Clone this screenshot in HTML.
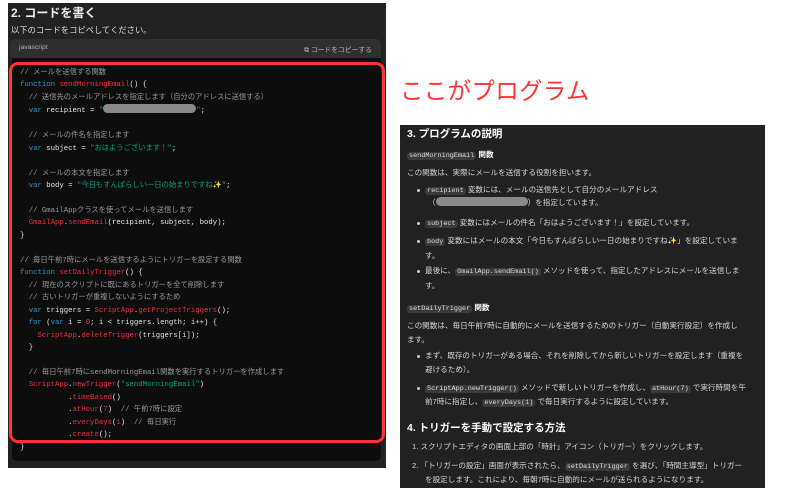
<!DOCTYPE html>
<html><head><meta charset="utf-8"><style>
*{margin:0;padding:0;box-sizing:border-box}
body{width:800px;height:500px;background:#fff;position:relative;overflow:hidden;font-family:"Liberation Sans","Noto Sans CJK JP",sans-serif}
.lp{position:absolute;left:8px;top:3px;width:378px;height:465px;background:#212121}
.h2{position:absolute;left:3px;top:1px;color:#ececec;font-size:12px;font-weight:bold}
.intro{position:absolute;left:3px;top:21px;color:#ddd;font-size:8.3px}
.hdr{position:absolute;left:10px;top:39px;width:371px;height:19px;background:#2f2f2f;border-radius:5px 5px 0 0;color:#b4b4b4;font-size:6.8px}
.code{position:absolute;left:12px;top:58px;width:369px;height:403px;background:#0d0d0d;border-radius:0 0 5px 5px}
.red{position:absolute;left:9px;top:62px;width:376px;height:381px;border:3px solid #f33;border-radius:9px}
pre{position:absolute;left:20px;top:67px;font-family:"Liberation Mono","Noto Sans CJK JP",monospace;font-size:7.3px;line-height:12.45px;color:#e6e6e6}
.c{color:#9a9a9a}.k{color:#2e95d3}.f{color:#f22c3d}.s{color:#00a67d}.n{color:#df3079}
.blur{display:inline-block;width:93px;height:9px;background:#8a8a8a;border-radius:5px;vertical-align:-1px}
.rt{position:absolute;left:400px;top:72px;color:#f33;font-size:23.5px;letter-spacing:0.3px}
.rp{position:absolute;left:400px;top:125px;width:365px;height:363px;background:#212121;color:#d8d8d8;font-size:7.6px}
.rp div{position:absolute;white-space:nowrap}
.ic{background:#3a3a3a;border-radius:3px;padding:0 2px;font-family:"Liberation Mono",monospace;font-size:6.8px;color:#ddd}
.b{color:#fff;font-weight:bold}
.dot{position:absolute;width:3px;height:3px;background:#ccc;border-radius:50%}
</style></head><body>
<div class="lp">
<div class="h2">2. コードを書く</div>
<div class="intro">以下のコードをコピペしてください。</div>
</div>
<div class="hdr"><span style="position:absolute;left:9px;top:5px">javascript</span><span style="position:absolute;right:9px;top:5px">⧉ コードをコピーする</span></div>
<div class="code"></div>
<pre><span class="c">// メールを送信する関数</span>
<span class="k">function</span> <span class="f">sendMorningEmail</span>() {
  <span class="c">// 送信先のメールアドレスを指定します（自分のアドレスに送信する）</span>
  <span class="k">var</span> recipient = <span class="s">"<span class="blur"></span>"</span>;

  <span class="c">// メールの件名を指定します</span>
  <span class="k">var</span> subject = <span class="s">"おはようございます！"</span>;

  <span class="c">// メールの本文を指定します</span>
  <span class="k">var</span> body = <span class="s">"今日もすんばらしい一日の始まりですね✨"</span>;

  <span class="c">// GmailAppクラスを使ってメールを送信します</span>
  <span class="f">GmailApp</span>.<span class="f">sendEmail</span>(recipient, subject, body);
}

<span class="c">// 毎日午前7時にメールを送信するようにトリガーを設定する関数</span>
<span class="k">function</span> <span class="f">setDailyTrigger</span>() {
  <span class="c">// 現在のスクリプトに既にあるトリガーを全て削除します</span>
  <span class="c">// 古いトリガーが重複しないようにするため</span>
  <span class="k">var</span> triggers = <span class="f">ScriptApp</span>.<span class="f">getProjectTriggers</span>();
  <span class="k">for</span> (<span class="k">var</span> i = <span class="n">0</span>; i &lt; triggers.length; i++) {
    <span class="f">ScriptApp</span>.<span class="f">deleteTrigger</span>(triggers[i]);
  }

  <span class="c">// 毎日午前7時にsendMorningEmail関数を実行するトリガーを作成します</span>
  <span class="f">ScriptApp</span>.<span class="f">newTrigger</span>(<span class="s">"sendMorningEmail"</span>)
           .<span class="f">timeBased</span>()
           .<span class="f">atHour</span>(<span class="n">7</span>)  <span class="c">// 午前7時に設定</span>
           .<span class="f">everyDays</span>(<span class="n">1</span>)  <span class="c">// 毎日実行</span>
           .<span class="f">create</span>();
}</pre>
<div class="red"></div>
<div class="rt">ここがプログラム</div>
<div class="rp">
<div class="b" style="left:7px;top:1px;font-size:10.5px">3. プログラムの説明</div>
<div style="left:7px;top:24px"><span class="ic">sendMorningEmail</span> <span class="b">関数</span></div>
<div style="left:7px;top:42px">この関数は、実際にメールを送信する役割を担います。</div>
<span class="dot" style="left:17px;top:64px"></span>
<div style="left:25px;top:59px"><span class="ic">recipient</span> 変数には、メールの送信先として自分のメールアドレス</div>
<div style="left:28px;top:72px">（<span class="blur" style="width:92px"></span>）を指定しています。</div>
<span class="dot" style="left:17px;top:97px"></span>
<div style="left:25px;top:92px"><span class="ic">subject</span> 変数にはメールの件名「おはようございます！」を設定しています。</div>
<span class="dot" style="left:17px;top:115px"></span>
<div style="left:25px;top:110px"><span class="ic">body</span> 変数にはメールの本文「今日もすんばらしい一日の始まりですね✨」を設定していま</div>
<div style="left:25px;top:125px">す。</div>
<span class="dot" style="left:17px;top:145px"></span>
<div style="left:25px;top:140px">最後に、<span class="ic">GmailApp.sendEmail()</span> メソッドを使って、指定したアドレスにメールを送信しま</div>
<div style="left:25px;top:155px">す。</div>
<div style="left:7px;top:177px"><span class="ic">setDailyTrigger</span> <span class="b">関数</span></div>
<div style="left:7px;top:195px">この関数は、毎日午前7時に自動的にメールを送信するためのトリガー（自動実行設定）を作成し</div>
<div style="left:7px;top:209px">ます。</div>
<span class="dot" style="left:17px;top:230px"></span>
<div style="left:25px;top:225px">まず、既存のトリガーがある場合、それを削除してから新しいトリガーを設定します（重複を</div>
<div style="left:25px;top:239px">避けるため）。</div>
<span class="dot" style="left:17px;top:262px"></span>
<div style="left:25px;top:257px"><span class="ic">ScriptApp.newTrigger()</span> メソッドで新しいトリガーを作成し、<span class="ic">atHour(7)</span> で実行時間を午</div>
<div style="left:25px;top:271px">前7時に指定し、<span class="ic">everyDays(1)</span> で毎日実行するように設定しています。</div>
<div class="b" style="left:7px;top:295px;font-size:10.5px">4. トリガーを手動で設定する方法</div>
<div style="left:12px;top:316px">1.  スクリプトエディタの画面上部の「時計」アイコン（トリガー）をクリックします。</div>
<div style="left:12px;top:335px">2. 「トリガーの設定」画面が表示されたら、<span class="ic">setDailyTrigger</span> を選び、「時間主導型」トリガー</div>
<div style="left:25px;top:349px">を設定します。これにより、毎朝7時に自動的にメールが送られるようになります。</div>
</div>
</body></html>
